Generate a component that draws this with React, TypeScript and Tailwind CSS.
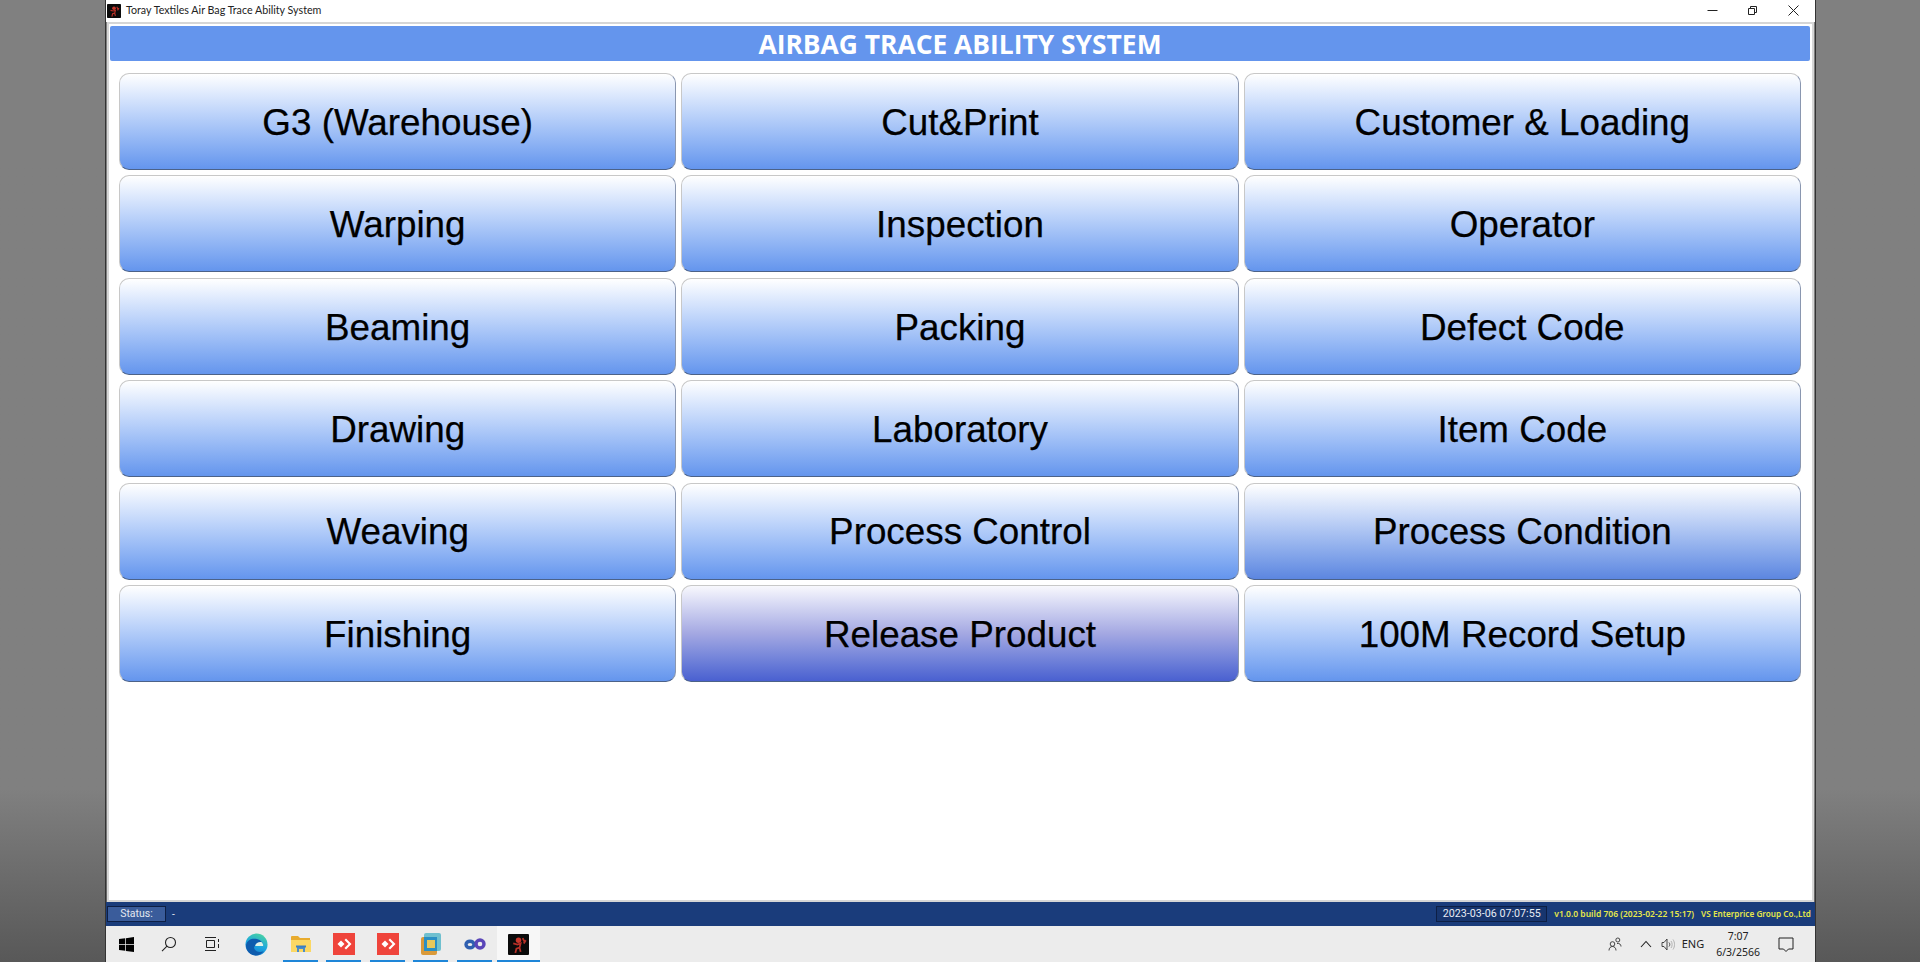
import React from 'react';

const buttons = [
  'G3 (Warehouse)', 'Cut&Print', 'Customer & Loading',
  'Warping', 'Inspection', 'Operator',
  'Beaming', 'Packing', 'Defect Code',
  'Drawing', 'Laboratory', 'Item Code',
  'Weaving', 'Process Control', 'Process Condition',
  'Finishing', 'Release Product', '100M Record Setup',
];

const TorayIcon: React.FC<{ size: number }> = ({ size }) => (
  <svg width={size} height={size} viewBox="0 0 20 20">
    <rect width="20" height="20" rx="1" fill="#0b0b0b" />
    <circle cx="10" cy="6" r="2.6" fill="#c9372c" />
    <path d="M5 9l4 1 3-1-1 4-3 1-1 4M11 13l1 4M14 4l1.500 3M17 6l-2 3" stroke="#b83027" strokeWidth="1.700" fill="none" />
  </svg>
);

const AnyDeskIcon: React.FC = () => (
  <svg width="22" height="22" viewBox="0 0 22 22">
    <rect width="22" height="22" fill="#ef443b" />
    <path d="M8 7.500l3.500 3.500L8 14.500 4.500 11z" fill="#fff" />
    <path d="M13 5.500l5.500 5.500-5.500 5.500-1.500-1.500 4-4-4-4z" fill="#fff" />
  </svg>
);

const App: React.FC = () => {
  const btnBase =
    'flex items-center justify-center h-[97px] pt-[2px] rounded-[10px] border border-[#c8c8c8] border-b-[#4c6288] border-r-[#8a97b0] text-[36.8px] text-black [-webkit-text-stroke:0.25px_black]';

  return (
    <div className="flex h-[962px] w-[1920px] overflow-hidden bg-gradient-to-b from-[#808080] from-[82%] to-[#585858] font-['Liberation_Sans',sans-serif]">
      <div className="w-[105px] shrink-0" />

      <div className="flex w-[1711px] shrink-0 flex-col border-x border-[#333]">
        {/* title bar */}
        <div className="flex h-[22px] shrink-0 items-center bg-white pb-[2px]">
          <div className="ml-[1px] mt-[2px]"><TorayIcon size={14} /></div>
          <span className="ml-[5px] font-['Lato',sans-serif] text-[10.7px] text-[#222]">
            Toray Textiles Air Bag Trace Ability System
          </span>
          <div className="ml-auto flex items-center">
            <svg width="11" height="11" viewBox="0 0 11 11" className="mr-[29px]">
              <path d="M0.500 5.500h10" stroke="#222" strokeWidth="1" />
            </svg>
            <svg width="11" height="11" viewBox="0 0 11 11" className="mr-[30px]">
              <path d="M1.500 3.500h6v6h-6zM3.500 3.500v-2h6v6h-2" stroke="#222" strokeWidth="1" fill="none" />
            </svg>
            <svg width="11" height="11" viewBox="0 0 11 11" className="mr-[16px]">
              <path d="M0.500 0.500l10 10M10.500 0.500l-10 10" stroke="#222" strokeWidth="1" />
            </svg>
          </div>
        </div>

        {/* client area */}
        <div className="mx-[1px] flex flex-1 flex-col border-2 border-[#d6d6d6] bg-white pl-[1px] pr-[2px] pt-[2px]">
          <div className="flex h-[35px] shrink-0 items-center justify-center rounded-[2px] bg-[#6495ed] pt-[3px] font-['Open_Sans',sans-serif] text-[26.4px] font-bold text-white">
            AIRBAG TRACE ABILITY SYSTEM
          </div>
          <div className="mt-[12px] grid grid-cols-3 gap-x-[5px] gap-y-[5.4px] px-[9px]">
            {buttons.map((label) => {
              let grad = 'bg-gradient-to-b from-white to-[#6495ed]';
              if (label === 'Release Product') grad = 'bg-gradient-to-b from-[#f8f8fd] via-[#a4a8e2] to-[#4a60d0]';
              if (label === 'Process Condition') grad = 'bg-gradient-to-b from-white to-[#5c86e0]';
              return (
                <div key={label} className={`${btnBase} ${grad}`}>
                  {label}
                </div>
              );
            })}
          </div>
        </div>

        {/* status bar */}
        <div className="flex h-[24px] shrink-0 items-center bg-[#1a3c7b] font-['Roboto',sans-serif]">
          <div className="ml-[1px] flex h-[16px] w-[59px] items-center justify-center border border-[#0d1f45] bg-[#3a5c9b] text-[10.5px] text-[#e4e8f0]">
            Status:
          </div>
          <span className="ml-[6px] text-[10px] text-[#e4e8f0]">-</span>
          <div className="ml-auto flex h-[16px] w-[111px] items-center justify-center border border-[#0d1f45] bg-[#17356e] text-[10.7px] text-[#e8ecf4]">
            2023-03-06 07:07:55
          </div>
          <span className="ml-[7px] font-['Noto_Sans',sans-serif] text-[8.5px] font-semibold text-[#e6e84a]">v1.0.0 build 706 (2023-02-22 15:17)</span>
          <span className="ml-[7px] mr-[4px] font-['Noto_Sans',sans-serif] text-[8.2px] font-semibold text-[#e6e84a]">VS Enterprice Group Co.,Ltd</span>
        </div>

        {/* taskbar */}
        <div className="flex h-[36px] shrink-0 items-stretch bg-[#ececec] font-['Noto_Sans',sans-serif] text-[#222]">
          <div className="flex w-[41px] items-center justify-center">
            <svg width="15" height="15" viewBox="0 0 16 16">
              <path d="M0 2.200l6.600-.9v6.300H0zM7.400 1.200L16 0v7.600H7.400zM0 8.400h6.600v6.300L0 13.800zM7.400 8.400H16V16l-8.600-1.200z" fill="#000" />
            </svg>
          </div>
          <div className="flex w-[44px] items-center justify-center">
            <svg width="16" height="16" viewBox="0 0 16 16" fill="none" stroke="#222" strokeWidth="1.100">
              <circle cx="9.500" cy="6.500" r="5" />
              <path d="M6 10.200L1 15.200" />
            </svg>
          </div>
          <div className="flex w-[42px] items-center justify-center">
            <svg width="16" height="16" viewBox="0 0 16 16" fill="none" stroke="#222" strokeWidth="1">
              <path d="M2.500 4.500h8v7h-8zM1 1.500h11M1 14.500h11M14.500 3v3M14.500 8v4" />
            </svg>
          </div>
          <div className="flex w-[46px] items-center justify-center">
            <svg width="23" height="23" viewBox="0 0 24 24">
              <defs>
                <linearGradient id="edgeA" x1="0.900" y1="0" x2="0.500" y2="1">
                  <stop offset="0" stopColor="#4fd89a" />
                  <stop offset="0.600" stopColor="#1ca6e0" />
                  <stop offset="1" stopColor="#1a7fd0" />
                </linearGradient>
              </defs>
              <circle cx="12" cy="12" r="11.500" fill="url(#edgeA)" />
              <path d="M1 13C2 7 7 5.500 11 6c4 .5 8 3 8 7.500H11c-1.500 0-2 1.500-1 3.500 1.500 2.500 5 3.500 9.500 2-2 2.500-5 4.500-8 4.500C6 23.500 1 19 1 13z" fill="#0e5cae" />
              <path d="M10.500 13.500h8.500c0-2-1-3.500-2-4-2.500-.5-6 1-6.500 4z" fill="#dff3ea" />
            </svg>
          </div>
          <div className="relative flex w-[43px] items-center justify-center">
            <svg width="20" height="18" viewBox="0 0 20 18">
              <path d="M0 2a1 1 0 011-1h6l2 2h10v14H0z" fill="#e8ab2e" />
              <path d="M0 5h20v12H0z" fill="#fbd864" />
              <path d="M6 12h8v5h-2v-3H8v3H6z" fill="#4b8ec9" />
              <path d="M5 10.500h10v2H5z" fill="#3b7fc2" />
            </svg>
            <div className="absolute bottom-0 left-[4px] h-[2px] w-[35px] bg-[#1e86d8]" />
          </div>
          <div className="relative flex w-[44px] items-center justify-center">
            <AnyDeskIcon />
            <div className="absolute bottom-0 left-[4px] h-[2px] w-[35px] bg-[#1e86d8]" />
          </div>
          <div className="relative flex w-[43px] items-center justify-center">
            <AnyDeskIcon />
            <div className="absolute bottom-0 left-[4px] h-[2px] w-[35px] bg-[#1e86d8]" />
          </div>
          <div className="relative flex w-[44px] items-center justify-center">
            <svg width="20" height="22" viewBox="0 0 20 22">
              <rect x="3" y="0" width="17" height="18" rx="2" fill="#6fc0cf" />
              <rect x="0" y="4" width="16" height="18" rx="2" fill="#d99a3a" />
              <rect x="3" y="4" width="13" height="14" fill="#2a8fc4" />
              <rect x="6" y="7" width="8" height="8" fill="#e8c85a" />
            </svg>
            <div className="absolute bottom-0 left-[4px] h-[2px] w-[35px] bg-[#1e86d8]" />
          </div>
          <div className="relative flex w-[44px] items-center justify-center">
            <svg width="22" height="12" viewBox="0 0 22 12" fill="none" strokeWidth="3.400">
              <ellipse cx="6" cy="6.500" rx="4" ry="3.300" stroke="#2f5fb0" />
              <circle cx="16" cy="6" r="4" stroke="#5a45b8" />
            </svg>
            <div className="absolute bottom-0 left-[4px] h-[2px] w-[35px] bg-[#1e86d8]" />
          </div>
          <div className="relative flex w-[43px] items-center justify-center bg-[#f7f7f7]">
            <TorayIcon size={21} />
            <div className="absolute bottom-0 left-0 h-[2px] w-full bg-[#1e86d8]" />
          </div>

          {/* tray */}
          <div className="ml-auto flex items-center">
            <svg width="14" height="14" viewBox="0 0 14 14" fill="none" stroke="#333" strokeWidth="0.900" className="mr-[18px]">
              <circle cx="4.500" cy="7" r="2.300" />
              <path d="M1 13.500c0-2.500 1.500-4 3.500-4s3.500 1.500 3.500 4" />
              <circle cx="9.800" cy="3" r="2" />
              <path d="M9 6.500c2.500-.5 4 1 4 3" />
            </svg>
            <svg width="12" height="8" viewBox="0 0 12 8" fill="none" stroke="#222" strokeWidth="1.100" className="mr-[9px]">
              <path d="M1 7l5-5.500L11 7" />
            </svg>
            <svg width="15" height="13" viewBox="0 0 15 13" fill="none" stroke="#333" strokeWidth="0.900" className="mr-[5.5px]">
              <path d="M1 4.500h2L6 1v11L3 8.500H1zM8 4.500c1 1 1 3 0 4" />
              <path d="M10 3c1.500 2 1.500 5 0 7M12 1.500c2 3 2 7 0 10" stroke="#aaa" />
            </svg>
            <span className="mr-[12px] text-[11px]">ENG</span>
            <div className="mr-[18px] flex flex-col items-center text-[10.500px] leading-[16px]">
              <span>7:07</span>
              <span>6/3/2566</span>
            </div>
            <svg width="16" height="16" viewBox="0 0 16 16" fill="none" stroke="#222" strokeWidth="1" className="mr-[21px]">
              <path d="M1 2h14v11H10.500L8 15.500 5.500 13H1z" />
            </svg>
          </div>
        </div>
      </div>

      <div className="flex-1" />
    </div>
  );
};

export default App;
